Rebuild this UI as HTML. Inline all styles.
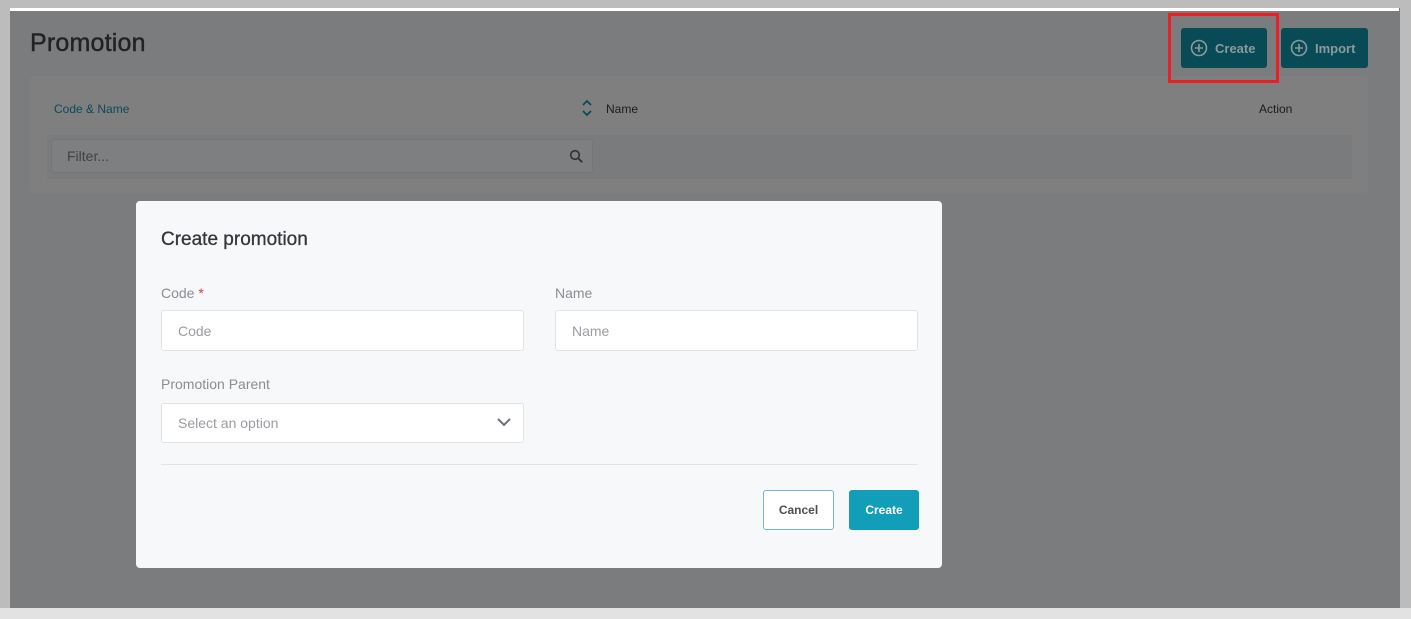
<!DOCTYPE html>
<html><head><style>
*{box-sizing:border-box;margin:0;padding:0}
body{width:1411px;height:619px;background:#bbbcbb;position:relative;overflow:hidden;font-family:"Liberation Sans",Arial,sans-serif}
.abs{position:absolute}
.screen{left:10px;top:8px;width:1390px;height:600px;background:#7b7c7d}
.topline{left:10px;top:8px;width:1389px;height:3px;background:#fff}
.bottom{left:0;top:608px;width:1411px;height:11px;background:#e1e2e1}
.card{left:30px;top:76px;width:1338px;height:117px;background:#7f7f80;border-radius:4px}
.band{left:47px;top:135px;width:1305px;height:44px;background:#7a7b7c}
.filter{left:51px;top:139px;width:542px;height:34px;border:1px solid #757677;background:#7e7f80;border-radius:3px}
.btn{height:40px;background:#084a55;border-radius:3px;color:#8a9a9d;font-weight:bold;font-size:13px;display:flex;align-items:center;padding-left:9px;gap:7px}
.modal{left:136px;top:201px;width:806px;height:367px;background:#f7f8fa;border-radius:4px}
.lbl{font-size:14px;color:#8a8d91}
.inp{background:#fff;border:1px solid #e1e3e6;border-radius:3px;height:41px;font-size:14px;color:#9a9da1;padding-left:16px;display:flex;align-items:center}
</style></head><body>
<div class="abs screen"></div>
<div class="abs topline"></div>
<div class="abs bottom"></div>
<div class="abs" style="left:30px;top:29px;font-size:25px;color:#202224;letter-spacing:0.2px;-webkit-text-stroke:0.4px #202224">Promotion</div>
<div class="abs card"></div>
<div class="abs" style="left:1168px;top:13px;width:111px;height:70px;border:3px solid #ec1d24"></div>
<div class="abs btn" style="left:1181px;top:28px;width:86px">
<svg width="18" height="18" viewBox="0 0 18 18"><circle cx="9" cy="9" r="7.5" fill="none" stroke="#8a9a9d" stroke-width="1.6"/><path d="M9 5v8M5 9h8" stroke="#8a9a9d" stroke-width="1.6"/></svg>Create</div>
<div class="abs btn" style="left:1281px;top:28px;width:87px">
<svg width="18" height="18" viewBox="0 0 18 18"><circle cx="9" cy="9" r="7.5" fill="none" stroke="#8a9a9d" stroke-width="1.6"/><path d="M9 5v8M5 9h8" stroke="#8a9a9d" stroke-width="1.6"/></svg>Import</div>
<div class="abs" style="left:54px;top:102px;font-size:12px;color:#0b4b57">Code &amp; Name</div>
<svg class="abs" style="left:581px;top:99px" width="12" height="18" viewBox="0 0 12 18"><path d="M2 6l4-4 4 4M2 12l4 4 4-4" fill="none" stroke="#0b4b57" stroke-width="1.8"/></svg>
<div class="abs" style="left:606px;top:102px;font-size:12px;color:#1a1c1e">Name</div>
<div class="abs" style="left:1259px;top:102px;font-size:12px;color:#1a1c1e">Action</div>
<div class="abs band"></div>
<div class="abs filter"></div>
<div class="abs" style="left:67px;top:148px;font-size:14px;color:#3f4245">Filter...</div>
<svg class="abs" style="left:569px;top:149px" width="15" height="15" viewBox="0 0 15 15"><circle cx="6" cy="6" r="4.3" fill="none" stroke="#2e3134" stroke-width="1.6"/><path d="M9.2 9.2l4 4" stroke="#2e3134" stroke-width="1.8"/></svg>
<div class="abs modal"></div>
<div class="abs" style="left:161px;top:229px;font-size:19px;color:#33363a;-webkit-text-stroke:0.3px #33363a">Create promotion</div>
<div class="abs lbl" style="left:161px;top:285px">Code <span style="color:#e03a3a">*</span></div>
<div class="abs inp" style="left:161px;top:310px;width:363px">Code</div>
<div class="abs lbl" style="left:555px;top:285px">Name</div>
<div class="abs inp" style="left:555px;top:310px;width:363px">Name</div>
<div class="abs lbl" style="left:161px;top:376px">Promotion Parent</div>
<div class="abs inp" style="left:161px;top:403px;width:363px;height:40px">Select an option</div>
<svg class="abs" style="left:496px;top:416px" width="16" height="12" viewBox="0 0 16 12"><path d="M2 3l6 6 6-6" fill="none" stroke="#6c7076" stroke-width="2"/></svg>
<div class="abs" style="left:161px;top:464px;width:757px;height:1px;background:#e1e3e6"></div>
<div class="abs" style="left:763px;top:490px;width:71px;height:40px;border:1px solid #6fb8c7;border-radius:3px;background:#fff;font-size:12px;font-weight:bold;color:#4b4f53;display:flex;align-items:center;justify-content:center">Cancel</div>
<div class="abs" style="left:849px;top:490px;width:70px;height:40px;border-radius:3px;background:#129eb8;font-size:12px;font-weight:bold;color:#fff;display:flex;align-items:center;justify-content:center">Create</div>
</body></html>
